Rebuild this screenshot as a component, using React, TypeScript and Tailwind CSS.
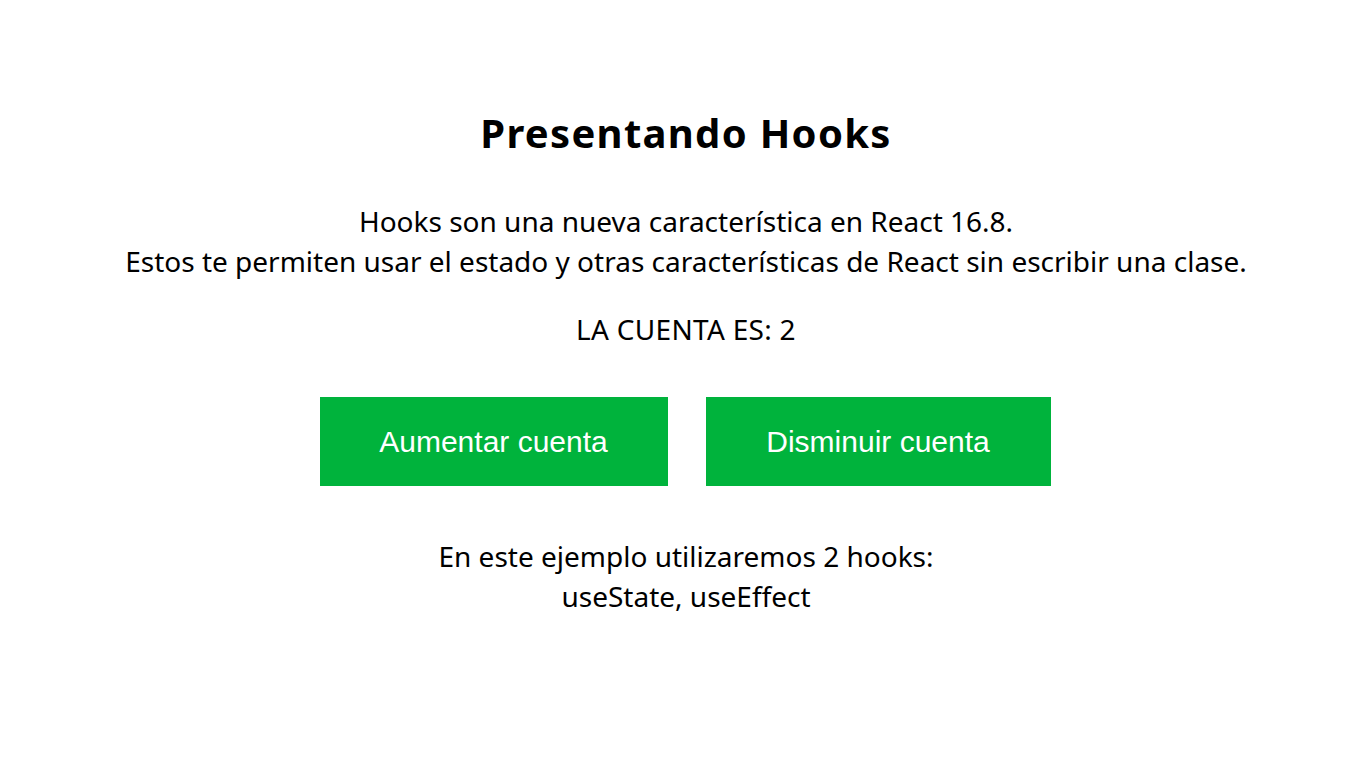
import { useState } from "react";

export default function App() {
  const [count, setCount] = useState(2);

  return (
    <div
      className="min-h-screen w-full bg-white text-black"
      style={{ fontFamily: '"Noto Sans", "Open Sans", sans-serif' }}
    >
      <div className="flex flex-col items-center pl-[6px] pt-[106px] text-center">
        <h1 className="text-[40px] font-bold leading-[54px] tracking-[1.3px]">Presentando Hooks</h1>

        <p className="mt-[41px] text-[28px] leading-[40px]">
          Hooks son una nueva característica en React 16.8.
          <br />
          Estos te permiten usar el estado y otras características de React sin escribir una clase.
        </p>

        <p className="mt-[28px] text-[28px] leading-[40px] tracking-[0.3px] uppercase">La cuenta es: {count}</p>

        <div className="mt-[48px] -ml-[2px] flex gap-[38px]">
          <button
            className="h-[89px] w-[348px] bg-[#00b33c] text-[30px] text-white"
            style={{ fontFamily: '"Liberation Sans", Arial, sans-serif' }}
            onClick={() => setCount(count + 1)}
          >
            Aumentar cuenta
          </button>
          <button
            className="h-[89px] w-[345px] bg-[#00b33c] text-[30px] text-white"
            style={{ fontFamily: '"Liberation Sans", Arial, sans-serif' }}
            onClick={() => setCount(count - 1)}
          >
            Disminuir cuenta
          </button>
        </div>

        <p className="mt-[50px] text-[28px] leading-[40px]">
          En este ejemplo utilizaremos 2 hooks:
          <br />
          useState, useEffect
        </p>
      </div>
    </div>
  );
}
